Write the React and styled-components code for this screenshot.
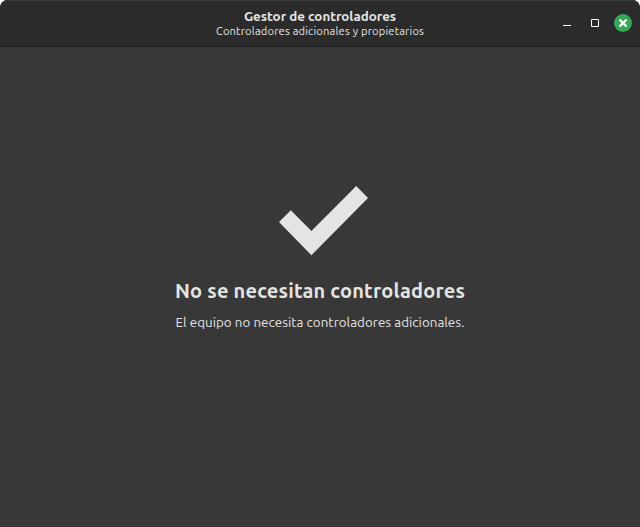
import React from "react";
import styled, { createGlobalStyle } from "styled-components";

const GlobalStyle = createGlobalStyle`
  body {
    margin: 0;
    background: #fff;
    overflow: hidden;
  }
`;

const Window = styled.div`
  display: flex;
  flex-direction: column;
  height: 527px;
  box-sizing: border-box;
  border-radius: 8px 8px 0 0;
  overflow: hidden;
  background: #383838;
  color: #e4e5e3;
  font-family: Ubuntu, "Noto Sans", sans-serif;
`;

const HeaderBar = styled.header`
  display: grid;
  grid-template-columns: 1fr auto 1fr;
  align-items: center;
  height: 47px;
  box-sizing: border-box;
  background: #2b2b2b;
  border-bottom: 1px solid #202020;
  box-shadow: inset 0 1px #3b3b3b;
`;

const Titles = styled.div`
  grid-column: 2;
  text-align: center;
  white-space: nowrap;
`;

const Title = styled.h1`
  margin: 0;
  font-size: 13.33px;
  line-height: 15px;
  font-weight: 700;
`;

const Subtitle = styled.div`
  font-size: 11.1px;
  line-height: 14px;
  letter-spacing: 0.2px;
`;

const Controls = styled.div`
  display: flex;
  align-items: center;
  justify-content: flex-end;
  gap: 10px;
  padding-right: 8px;
`;

const ControlButton = styled.button`
  display: block;
  width: 18px;
  height: 18px;
  padding: 0;
  border: 0;
  border-radius: 50%;
  color: #fff;
  background: ${(p) => (p.$accent ? "#35a854" : "transparent")};

  svg {
    display: block;
  }
`;

const Content = styled.main`
  display: flex;
  flex: 1;
  flex-direction: column;
  align-items: center;
  padding-top: 139px;
  white-space: nowrap;
`;

const CheckIcon = styled.svg`
  display: block;
  margin-left: 8px;
`;

const Heading = styled.h2`
  margin: 21px 0 0;
  font-size: 20px;
  line-height: 28px;
  font-weight: 700;
  letter-spacing: 0.2px;
`;

const Message = styled.p`
  margin: 9px 0 0;
  font-size: 13.33px;
  line-height: 18px;
  letter-spacing: 0.06px;
`;

export default function App() {
  return (
    <>
      <GlobalStyle />
      <Window>
        <HeaderBar>
          <Titles>
            <Title>Gestor de controladores</Title>
            <Subtitle>Controladores adicionales y propietarios</Subtitle>
          </Titles>
          <Controls>
            <ControlButton aria-label="Minimizar">
              <svg width="18" height="18" viewBox="0 0 18 18">
                <path d="M5 11.5h8" stroke="currentColor" />
              </svg>
            </ControlButton>
            <ControlButton aria-label="Maximizar">
              <svg width="18" height="18" viewBox="0 0 18 18">
                <path d="M5.5 5.5h7v7h-7z" fill="none" stroke="currentColor" />
              </svg>
            </ControlButton>
            <ControlButton $accent aria-label="Cerrar">
              <svg width="18" height="18" viewBox="0 0 18 18">
                <path d="M5.5 5.5l7 7M12.5 5.5l-7 7" stroke="currentColor" strokeWidth="2.3" />
              </svg>
            </ControlButton>
          </Controls>
        </HeaderBar>
        <Content>
          <CheckIcon width="90" height="70" viewBox="0 0 90 70">
            <path d="M0 36 11.8 24.2 32.4 45 77.2 0 89 12 32.4 69.2z" fill="#e4e4e4" />
          </CheckIcon>
          <Heading>No se necesitan controladores</Heading>
          <Message>El equipo no necesita controladores adicionales.</Message>
        </Content>
      </Window>
    </>
  );
}
